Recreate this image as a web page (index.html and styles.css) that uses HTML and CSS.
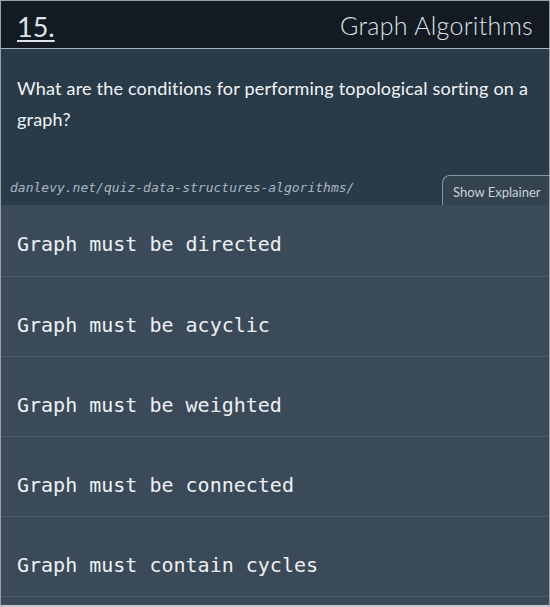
FILE: index.html
```html
<!DOCTYPE html>
<html>
<head>
<meta charset="utf-8">
<link rel="stylesheet" href="styles.css">
</head>
<body>
<div class="card">
  <header class="head">
    <span class="num">15.</span>
    <span class="cat">Graph Algorithms</span>
  </header>
  <section class="question">
    <p class="qtext">What are the conditions for performing topological sorting on a graph?</p>
    <div class="meta">
      <span class="link">danlevy.net/quiz-data-structures-algorithms/</span>
      <button class="explain">Show Explainer</button>
    </div>
  </section>
  <ul class="options">
    <li class="opt">Graph must be directed</li>
    <li class="opt">Graph must be acyclic</li>
    <li class="opt">Graph must be weighted</li>
    <li class="opt">Graph must be connected</li>
    <li class="opt">Graph must contain cycles</li>
  </ul>
</div>
</body>
</html>
```
FILE: styles.css
```css
html, body {
  margin: 0;
  padding: 0;
  background: #3a4a58;
}
.card {
  width: 550px;
  height: 607px;
  box-sizing: border-box;
  border: 1px solid #9aa0a6;
  border-bottom: 2px solid #cfc2d2;
  overflow: hidden;
  display: flex;
  flex-direction: column;
  background: #3a4a58;
}
.head {
  height: 47px;
  flex: none;
  background: #131a21;
  border-bottom: 1px solid #a9b2ba;
  display: flex;
  align-items: center;
  justify-content: space-between;
  padding: 0 16px 0 16px;
  color: #dfe3e8;
  font-family: Lato, "Open Sans", sans-serif;
}
.num {
  font-size: 27px;
  text-decoration: underline;
  text-underline-offset: 3px;
  text-decoration-thickness: 2px;
  margin-top: 3px;
}
.cat {
  font-size: 25px;
  font-weight: 300;
  letter-spacing: 0.3px;
}
.question {
  background: #293a48;
  flex: none;
  height: 156px;
  display: flex;
  flex-direction: column;
  justify-content: space-between;
}
.qtext {
  margin: 0;
  padding: 24px 16px 0 16px;
  color: #f3f5f7;
  font-family: Lato, "Open Sans", sans-serif;
  font-size: 18px;
  line-height: 31px;
  letter-spacing: 0.2px;
}
.meta {
  display: flex;
  align-items: flex-end;
  justify-content: space-between;
  padding-left: 9px;
}
.link {
  font-family: "DejaVu Sans Mono", monospace;
  font-style: italic;
  font-size: 13px;
  color: #aab6c2;
  padding-bottom: 10px;
}
.explain {
  height: 30px;
  width: 107px;
  box-sizing: border-box;
  border: 1px solid #8596a4;
  border-bottom: none;
  border-right: none;
  border-radius: 8px 0 0 0;
  background: #33444f;
  color: #c9d1d8;
  font-family: Lato, "Open Sans", sans-serif;
  font-size: 13px;
  padding: 2px 0 0 10px;
  text-align: left;
}
.options {
  list-style: none;
  margin: 0;
  padding: 0;
}
.opt {
  height: 80px;
  box-sizing: border-box;
  border-bottom: 1px solid #4b5b69;
  padding: 36px 16px 0 16px;
  font-family: "DejaVu Sans Mono", monospace;
  font-size: 20px;
  line-height: 24px;
  color: #eef1f4;
}
.opt:first-child {
  height: 72px;
  padding-top: 27px;
}
```
